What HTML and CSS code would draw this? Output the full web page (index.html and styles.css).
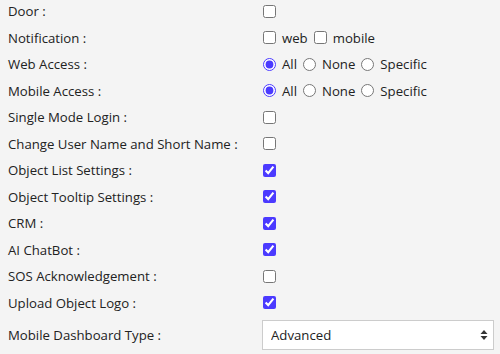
FILE: index.html
```html
<!DOCTYPE html>
<html>
<head>
    <title>User Settings</title>
    <link rel="stylesheet" href="styles.css">
</head>
<body>
    <div class="settings">
        <div class="label">Door :</div>
        <div class="field"><input type="checkbox"></div>

        <div class="label">Notification :</div>
        <div class="field">
            <label class="opt"><input type="checkbox"> web</label>
            <label class="opt"><input type="checkbox"> mobile</label>
        </div>

        <div class="label">Web Access :</div>
        <div class="field">
            <label class="opt"><input type="radio" name="web" checked> All</label>
            <label class="opt"><input type="radio" name="web"> None</label>
            <label class="opt"><input type="radio" name="web"> Specific</label>
        </div>

        <div class="label">Mobile Access :</div>
        <div class="field">
            <label class="opt"><input type="radio" name="mobile" checked> All</label>
            <label class="opt"><input type="radio" name="mobile"> None</label>
            <label class="opt"><input type="radio" name="mobile"> Specific</label>
        </div>

        <div class="label">Single Mode Login :</div>
        <div class="field"><input type="checkbox"></div>

        <div class="label">Change User Name and Short Name :</div>
        <div class="field"><input type="checkbox"></div>

        <div class="label">Object List Settings :</div>
        <div class="field"><input type="checkbox" checked></div>

        <div class="label">Object Tooltip Settings :</div>
        <div class="field"><input type="checkbox" checked></div>

        <div class="label">CRM :</div>
        <div class="field"><input type="checkbox" checked></div>

        <div class="label">AI ChatBot :</div>
        <div class="field"><input type="checkbox" checked></div>

        <div class="label">SOS Acknowledgement :</div>
        <div class="field"><input type="checkbox"></div>

        <div class="label">Upload Object Logo :</div>
        <div class="field"><input type="checkbox" checked></div>

        <div class="label last">Mobile Dashboard Type :</div>
        <div class="field last">
            <div class="select-wrap">
                <select class="select">
                    <option>Advanced</option>
                    <option>Basic</option>
                </select>
                <svg class="select-arrows" width="8" height="12" viewBox="0 0 8 12">
                    <path d="M4 1 L7.5 5 H0.5 Z M4 11 L7.5 7 H0.5 Z" fill="#333"/>
                </svg>
            </div>
        </div>
    </div>
</body>
</html>
```

FILE: styles.css
```css
body {
    font-family: "Open Sans", Arial, sans-serif;
    font-size: 13.2px;
    color: #222;
    margin: 0;
    padding: 0 8px 4px;
    background-color: #f4f4f4;
}

.settings {
    display: grid;
    grid-template-columns: 255px 1fr;
    grid-template-rows: repeat(12, 22px) 32px;
    row-gap: 4.5px;
}

.label {
    display: flex;
    align-items: center;
}

.field {
    display: flex;
    align-items: center;
    gap: 4px;
}

.label.last,
.field.last {
    height: 30px;
    align-self: end;
}

input[type="checkbox"],
input[type="radio"] {
    accent-color: #4b3aff;
    margin: 0;
}

input[type="radio"] {
    width: 13px;
    height: 13px;
}

.opt {
    display: flex;
    align-items: center;
    gap: 6px;
    margin-right: 2px;
}

.select-wrap {
    position: relative;
    margin-left: -1px;
    width: 232px;
    height: 30px;
}

.select {
    appearance: none;
    width: 100%;
    height: 100%;
    background-color: #fff;
    border: 1px solid #ccc;
    border-radius: 0;
    padding: 0 8px;
    font-family: "Open Sans", Arial, sans-serif;
    font-size: 13.2px;
    color: #222;
    outline: none;
}

.select-arrows {
    position: absolute;
    right: 6px;
    top: 9px;
    pointer-events: none;
}
```
